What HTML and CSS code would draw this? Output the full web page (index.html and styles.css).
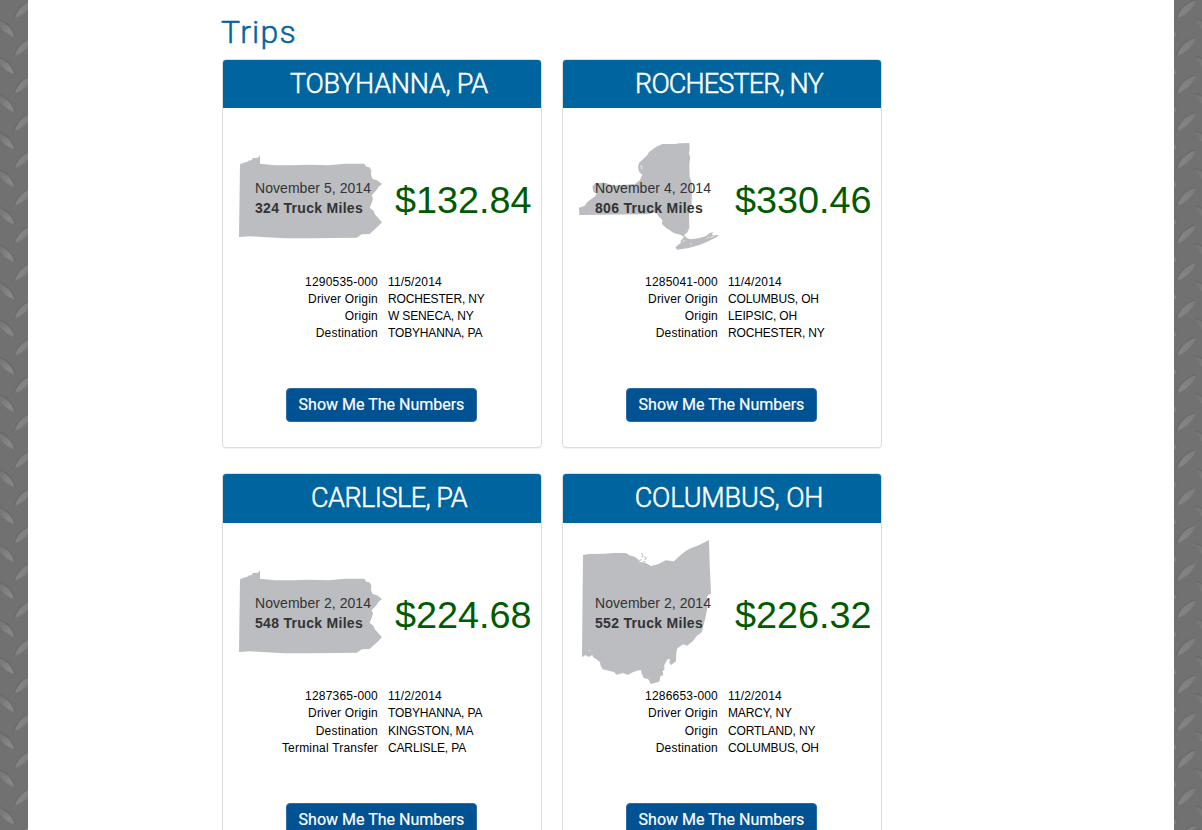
FILE: index.html
```
<!DOCTYPE html>
<html lang="en">
<head>
<meta charset="utf-8">
<title>Trips</title>
<link rel="stylesheet" href="styles.css">
</head>
<body>
<svg class="defs" width="0" height="0" aria-hidden="true">
  <defs>
    <linearGradient id="lug" x1="0" y1="0" x2="1" y2="1">
      <stop offset="0.3" stop-color="#777"/><stop offset="0.7" stop-color="#868686"/>
    </linearGradient>
    <linearGradient id="lug2" x1="0" y1="1" x2="1" y2="0">
      <stop offset="0" stop-color="#868686"/><stop offset="1" stop-color="#7d7d7d"/>
    </linearGradient>
    <pattern id="plate" width="37.5" height="37.5" patternUnits="userSpaceOnUse">
      <rect width="38" height="38" fill="#717171"/>
      <g id="lugs">
        <path d="M-5 18.5Q11 22 15 37Q2 33-5 18.5Z" fill="url(#lug)"/>
        <path d="M-5 18.5Q11 22 15 37" fill="none" stroke="#636363"/>
        <path d="M32.5 18.5Q48.5 22 52.5 37Q39.500 33 32.5 18.500Z" fill="url(#lug)"/>
        <path d="M32.500 18.500Q48.500 22 52.500 37" fill="none" stroke="#636363"/>
        <path d="M14 18.500Q18 4 34-.5Q28 14 14 18.500Z" fill="url(#lug2)"/>
        <path d="M14 18.500Q18 4 34-.5" fill="none" stroke="#636363"/>
      </g>
    </pattern>
    <path id="pa" d="M45 73L60 67L66 66L70 62L80 60L84 54L99 53L105 46V71L150 76L205 76L250 74L310 76L360 71L418 71L424 80L433 82L439 91L438 105L443 117L456 121L471 132L461 140L454 151L440 166L444 176L440 188L434 203L446 213L449 222L471 247L460 258L443 274L434 282L410 283L396 293L265 295L180 295L125 292L75 289L42 291Z"/>
    <path id="ny" d="M42 233L58 228L68 215L91 198L95 191L85 185L82 170L90 159L120 158L147 167L180 164L210 162L225 150L232 134L222 125L219 111L222 99L235 86L247 76L252 66L274 50L292 42L330 42L345 40L373 39L374 55L372 72L376 80L373 103L374 140L381 160L380 220L372 245L373 295L367 307L357 316L366 324L376 328L400 325L424 318L430 311L444 306L441 315L462 315L454 322L433 332L406 344L371 354L337 359L331 353L338 345L347 340L347 332L357 322L348 315L326 309L304 294L291 283L292 270L281 259L273 247L246 253L43 255Z"/>
    <path id="oh" d="M54 75L71 72L117 71L146 69L183 69L193 76L209 80L219 88L224 96L241 98L258 108L281 102L302 91L327 94L341 80L361 64L377 55L401 46L432 30L434 99L438 190L426 199L427 235L421 265L414 291L411 306L395 318L384 333L366 347L354 343L336 356L334 370L333 394L319 405L313 399L315 388L308 387L298 405L298 419L293 423L295 435L286 439L283 455L258 462L249 447L236 444L230 431L228 421L216 422L200 428L189 435L174 429L155 434L147 426L113 418L107 407L105 397L93 387L84 382L82 375L71 381L61 375L54 381L51 378Z"/>
  </defs>
</svg>
<div class="page">
  <svg class="edge" viewBox="0 0 28 830"><rect width="28" height="830" fill="url(#plate)"/></svg>
  <main class="content">
    <h1>Trips</h1>
    <div class="cards">
      <section class="card">
        <h2 class="city-tobyhanna">TOBYHANNA, PA</h2>
        <div class="summary">
          <div class="map">
            <svg viewBox="36 -54 450 450"><use href="#pa"/></svg>
            <div class="info"><span>November 5, 2014</span><b>324 Truck Miles</b></div>
          </div>
          <div class="price">$132.84</div>
        </div>
        <dl><dt>1290535-000</dt><dd>11/5/2014</dd><dt>Driver Origin</dt><dd>ROCHESTER, NY</dd><dt>Origin</dt><dd>W SENECA, NY</dd><dt>Destination</dt><dd>TOBYHANNA, PA</dd></dl>
        <button>Show Me The Numbers</button>
      </section>
      <section class="card">
        <h2 class="city-rochester">ROCHESTER, NY</h2>
        <div class="summary">
          <div class="map">
            <svg viewBox="36 -24 450 450"><use href="#ny"/><path d="M225 107l6 3-3 4 5 4M73 243h2M433 320l-8 6M352 335l8-4M375 341l5 2M450 316l-14 7" class="water"/></svg>
            <div class="info"><span>November 4, 2014</span><b>806 Truck Miles</b></div>
          </div>
          <div class="price">$330.46</div>
        </div>
        <dl><dt>1285041-000</dt><dd>11/4/2014</dd><dt>Driver Origin</dt><dd>COLUMBUS, OH</dd><dt>Origin</dt><dd>LEIPSIC, OH</dd><dt>Destination</dt><dd>ROCHESTER, NY</dd></dl>
        <button>Show Me The Numbers</button>
      </section>
      <section class="card">
        <h2 class="city-carlisle">CARLISLE, PA</h2>
        <div class="summary">
          <div class="map">
            <svg viewBox="36 -54 450 450"><use href="#pa"/></svg>
            <div class="info"><span>November 2, 2014</span><b>548 Truck Miles</b></div>
          </div>
          <div class="price">$224.68</div>
        </div>
        <dl><dt>1287365-000</dt><dd>11/2/2014</dd><dt>Driver Origin</dt><dd>TOBYHANNA, PA</dd><dt>Destination</dt><dd>KINGSTON, MA</dd><dt>Terminal Transfer</dt><dd>CARLISLE, PA</dd></dl>
        <button>Show Me The Numbers</button>
      </section>
      <section class="card">
        <h2 class="city-columbus">COLUMBUS, OH</h2>
        <div class="summary">
          <div class="map">
            <svg viewBox="36 21 450 450"><use href="#oh"/><path d="M229 69l4 5-2 8M236 80l8 4-5 6M221 92l9-3M233 96l8-2" class="isle"/><path d="M72 362h3" class="water"/></svg>
            <div class="info"><span>November 2, 2014</span><b>552 Truck Miles</b></div>
          </div>
          <div class="price">$226.32</div>
        </div>
        <dl><dt>1286653-000</dt><dd>11/2/2014</dd><dt>Driver Origin</dt><dd>MARCY, NY</dd><dt>Origin</dt><dd>CORTLAND, NY</dd><dt>Destination</dt><dd>COLUMBUS, OH</dd></dl>
        <button>Show Me The Numbers</button>
      </section>
    </div>
  </main>
  <svg class="edge" viewBox="1174 0 28 830"><rect x="1174" width="28" height="830" fill="url(#plate)"/></svg>
</div>
</body>
</html>
```
FILE: styles.css
```
* { box-sizing: border-box; }
html, body { margin: 0; height: 830px; overflow: hidden; }
body { font-family: "Liberation Sans", Arial, sans-serif; background: #fff; color: #000; }
.defs { position: absolute; }
.page { display: flex; height: 830px; overflow: hidden; }
.edge { flex: none; width: 28px; height: 830px; display: block; }
.content { flex: none; width: 1146px; height: 830px; overflow: hidden; padding: 10px 0 0 194px; }
h1 { margin: 0 0 5px -1px; height: 44px; font: 300 32px/44px Roboto, sans-serif; letter-spacing: 1.2px; color: #00659e; -webkit-text-stroke: .5px #00659e; }
.cards { display: grid; grid-template-columns: 320px 320px; grid-auto-rows: 389px; gap: 25.4px 20px; }
.card { border: 1px solid #ddd; border-radius: 4px; box-shadow: 0 1px 1px rgba(0,0,0,.05); display: flex; flex-direction: column; background: #fff; }
h2 { flex: none; margin: 0; height: 48.4px; padding-left: 14px; border-radius: 3px 3px 0 0; background: #00659e; color: #fff; text-align: center; font: 300 27px/48.4px Roboto, sans-serif; -webkit-text-stroke: .5px #fff; white-space: nowrap; }
.city-tobyhanna { letter-spacing: -.25px; }
.city-rochester { letter-spacing: -.85px; }
.city-carlisle { letter-spacing: -.5px; }
.city-columbus { letter-spacing: -.1px; }
.summary { flex: none; display: flex; height: 150px; margin: 13.9px 0 0 14px; }
.map { position: relative; width: 150px; flex: none; }
.map svg { display: block; width: 150px; height: 150px; fill: #bbbdc1; }
.water { fill: none; stroke: #fff; stroke-width: 2; }
.isle { fill: none; stroke: #bbbdc1; stroke-width: 3; }
.info { position: absolute; left: 18px; top: 56px; font-size: 14px; line-height: 20px; color: #333; white-space: nowrap; }
.info span, .info b { display: block; }
.info span { letter-spacing: .05px; }
.info b { letter-spacing: .3px; }
.price { padding-left: 8px; line-height: 156px; font-size: 37.8px; color: #005a00; white-space: nowrap; }
dl { flex: none; margin: 1.7px 0 0; display: grid; grid-template-columns: 155px 1fr; column-gap: 10px; grid-auto-rows: 17.14px; font-size: 12px; line-height: 17.14px; }
dt { text-align: right; letter-spacing: .2px; }
dd { margin: 0; letter-spacing: -.15px; }
dd:first-of-type { letter-spacing: .15px; }
button { flex: none; align-self: center; width: 191px; height: 34px; margin: 45.75px 1px 0 0; padding: 0; border: 1px solid #2a6ca8; border-radius: 4px; background: #005293; color: #fff; font: 400 16px/30px Roboto, sans-serif; letter-spacing: 0; -webkit-text-stroke: .2px #fff; }
```
